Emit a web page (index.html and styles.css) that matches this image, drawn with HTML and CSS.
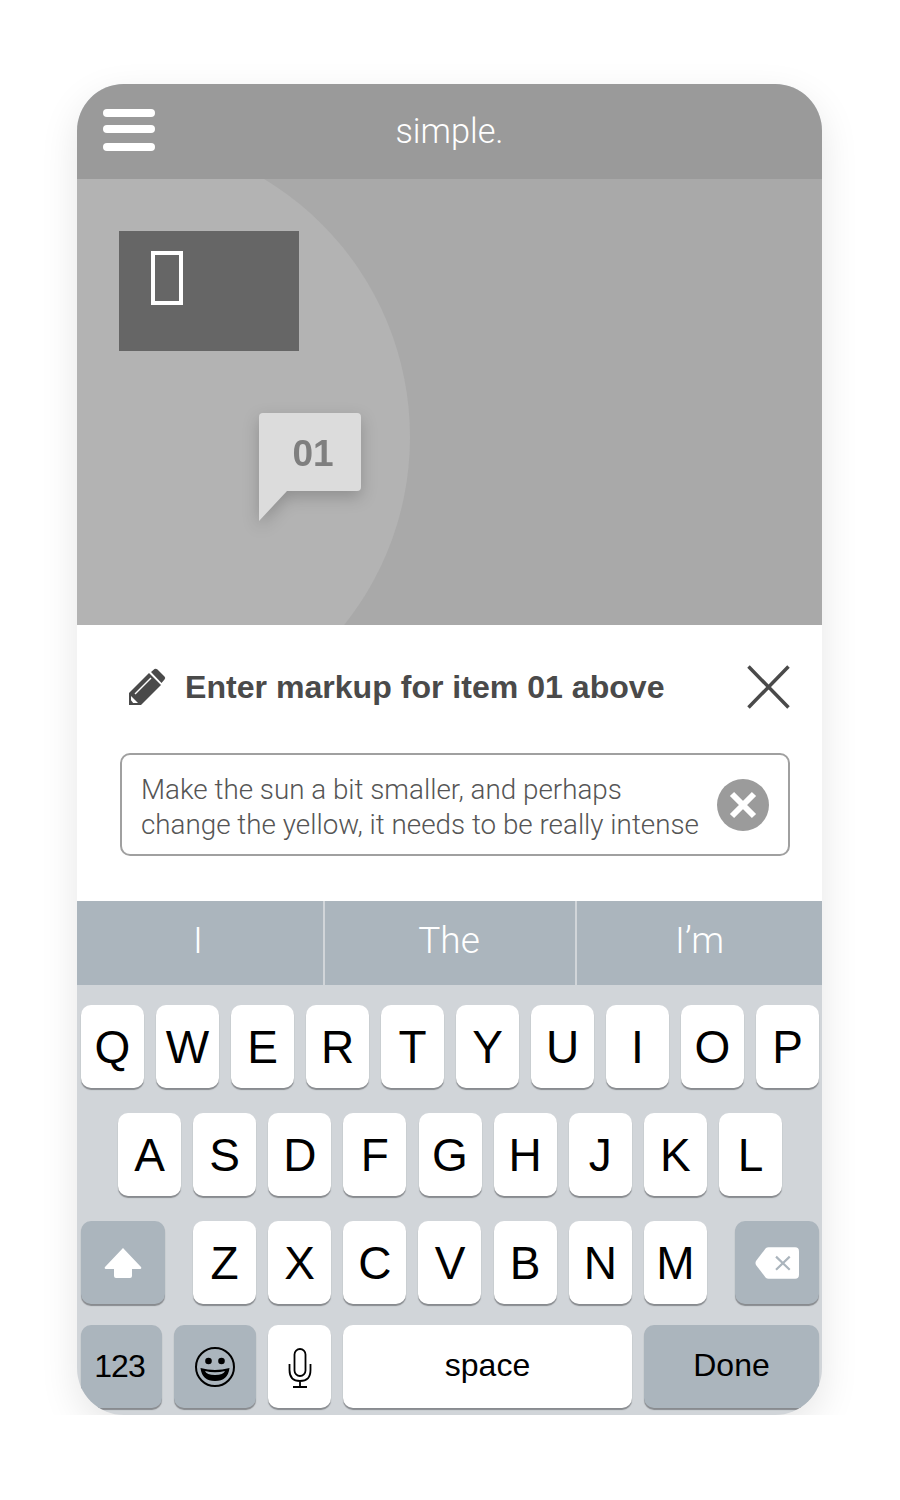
FILE: index.html
```html
<!DOCTYPE html>
<html lang="en">
<head>
  <meta charset="UTF-8">
  <meta name="viewport" content="width=device-width, initial-scale=1.0">
  <title>simple.</title>
  <link rel="stylesheet" href="styles.css">
</head>
<body>

<div class="phone">

  <!-- HEADER -->
  <div class="topbar">
    <div class="burger"><span></span><span></span><span></span></div>
    <div class="brand">simple.</div>
  </div>

  <!-- CANVAS -->
  <div class="canvas">
    <div class="sun"></div>
    <div class="photo"><span class="tofu"></span></div>
    <div class="pin">
      <svg width="102" height="108" viewBox="0 0 102 108">
        <path d="M4 0H98Q102 0 102 4V74Q102 78 98 78H28L0 108V4Q0 0 4 0Z" fill="#dcdcdc"/>
      </svg>
      <span class="pin-num">01</span>
    </div>
  </div>

  <!-- MARKUP PANEL -->
  <div class="panel">
    <div class="panel-head">
      <svg class="pencil" width="38" height="38" viewBox="0 0 38 38">
        <path d="M1 25L21 5L33 17L13 37H1Z" fill="#4a4a4a"/>
        <path d="M23 3L26.500 0Q28 -0.500 29.500 0.500L36.500 7.500Q38 9 36.500 10.500L33.500 14Z" fill="#4a4a4a" transform="translate(0 1)"/>
        <path d="M7 26L23 10" stroke="#fff" stroke-width="1.500"/>
        <path d="M3 28L10 35H3Z" fill="#fff"/>
        <path d="M2 31L6 36H2Z" fill="#4a4a4a"/>
      </svg>
      <h3>Enter markup for item 01 above</h3>
      <svg class="close-x" width="43" height="44" viewBox="0 0 43 44">
        <path d="M1.500 1.500L41.500 42.500M41.500 1.500L1.500 42.500" stroke="#4a4a4a" stroke-width="3.500" fill="none"/>
      </svg>
    </div>
    <div class="field">
      <p>Make the sun a bit smaller, and perhaps<br>change the yellow, it needs to be really intense</p>
      <svg class="clear" width="52" height="52" viewBox="0 0 52 52">
        <circle cx="26" cy="26" r="26" fill="#9b9b9b"/>
        <path d="M15 15L37 37M37 15L15 37" stroke="#fff" stroke-width="6"/>
      </svg>
    </div>
  </div>

  <!-- SUGGESTIONS -->
  <div class="suggest">
    <div class="word w1">I</div>
    <div class="word w2">The</div>
    <div class="word w3">I’m</div>
  </div>

  <!-- KEYBOARD -->
  <div class="keyboard">
    <div class="row">
      <div class="key">Q</div><div class="key">W</div><div class="key">E</div><div class="key">R</div><div class="key">T</div>
      <div class="key">Y</div><div class="key">U</div><div class="key">I</div><div class="key">O</div><div class="key">P</div>
    </div>
    <div class="row row-mid">
      <div class="key">A</div><div class="key">S</div><div class="key">D</div><div class="key">F</div><div class="key">G</div>
      <div class="key">H</div><div class="key">J</div><div class="key">K</div><div class="key">L</div>
    </div>
    <div class="row row-third">
      <div class="key dark wide">
        <svg width="40" height="32" viewBox="0 0 40 32">
          <path d="M20 1L38 20Q39 22 37 22H29V29Q29 31 27 31H13Q11 31 11 29V22H3Q1 22 2 20Z" fill="#fff"/>
        </svg>
      </div>
      <div class="letters">
        <div class="key">Z</div><div class="key">X</div><div class="key">C</div><div class="key">V</div>
        <div class="key">B</div><div class="key">N</div><div class="key">M</div>
      </div>
      <div class="key dark wide">
        <svg width="44" height="32" viewBox="0 0 45 32">
          <path d="M14 0H41Q45 0 45 4V28Q45 32 41 32H14Q12 32 11 31L1 18Q0 16 1 14L11 1Q12 0 14 0Z" fill="#fff"/>
          <path d="M21.500 9.500L35.500 23M35.500 9.500L21.500 23" stroke="#abb5bd" stroke-width="2.200"/>
        </svg>
      </div>
    </div>
    <div class="row row-bottom">
      <div class="key dark k123">123</div>
      <div class="key dark kemoji">
        <svg width="42" height="42" viewBox="0 0 42 42">
          <circle cx="21" cy="21" r="19" fill="none" stroke="#000" stroke-width="2"/>
          <circle cx="14.500" cy="15" r="3.300"/>
          <circle cx="27.500" cy="15" r="3.300"/>
          <path d="M6.500 22Q21 26 35.500 22Q34 35 21 35Q8 35 6.500 22Z"/>
          <path d="M11 25Q21 27.500 31 25Q29.500 29 21 29Q12.500 29 11 25Z" fill="#abb5bd"/>
        </svg>
      </div>
      <div class="key kmic">
        <svg width="24" height="42" viewBox="0 0 24 42">
          <rect x="6.500" y="3" width="11" height="27" rx="5.500" fill="none" stroke="#000" stroke-width="1.800"/>
          <path d="M1.500 18V24Q1.500 35 12 35Q22.500 35 22.500 24V18M12 35V41M5 41H19" fill="none" stroke="#000" stroke-width="1.800"/>
        </svg>
      </div>
      <div class="key kspace">space</div>
      <div class="key dark kdone">Done</div>
    </div>
  </div>

</div>

</body>
</html>
```

FILE: styles.css
```css
body { font-family: "Liberation Sans", Arial, sans-serif; margin: 0; background: #fff; }

.phone {
  width: 745px; height: 1331px;
  margin: 84px 0 0 77px;
  border-radius: 47px;
  overflow: hidden;
  background: #d1d5d9;
  box-shadow: 0 13px 38px rgba(0, 0, 0, 0.1);
}

/* header */
.topbar {
  height: 95px;
  background: #9a9a9a;
  display: flex; align-items: center; justify-content: center;
  position: relative;
}
.burger {
  position: absolute; top: 25px; left: 26px;
  width: 52px;
  display: flex; flex-direction: column;
}
.burger span { height: 8px; border-radius: 4px; background: #fff; margin-bottom: 8px; }
.burger span:nth-child(2) { margin-bottom: 10px; }
.brand {
  font-family: Roboto, sans-serif; font-weight: 300;
  font-size: 34.300px; color: #fff;
  margin-top: -1px;
}

/* picture area */
.canvas {
  height: 446px;
  background: #a9a9a9;
  position: relative;
  overflow: hidden;
}
.sun {
  position: absolute; left: -269px; top: -43px;
  width: 602px; height: 602px;
  border-radius: 50%;
  background: #b3b3b3;
}
.photo {
  position: absolute; left: 42px; top: 52px;
  width: 180px; height: 120px;
  background: #666;
}
.tofu {
  position: absolute; left: 32px; top: 20px;
  width: 32px; height: 54px;
  box-sizing: border-box;
  border: 4px solid #fff;
}
.pin {
  position: absolute; left: 182px; top: 234px;
  width: 102px; height: 108px;
  filter: drop-shadow(0 6px 8px rgba(0, 0, 0, 0.2));
}
.pin svg { display: block; }
.pin-num {
  position: absolute; top: 20px; left: 0; width: 108px;
  text-align: center;
  font-size: 37px; font-weight: bold; line-height: 42px;
  color: #7f7f7f;
}

/* markup panel */
.panel {
  height: 276px;
  background: #fff;
  box-sizing: border-box;
  padding: 40px 32px 0 43px;
}
.panel-head { display: flex; align-items: center; height: 44px; }
.pencil { margin: 0 19px 0 8px; flex: none; }
.panel-head h3 {
  margin: 0; flex: 1;
  font-size: 32.100px; font-weight: bold;
  color: #4a4a4a;
}
.close-x { flex: none; }
.field {
  margin-top: 44px;
  width: 670px; height: 103px;
  box-sizing: border-box;
  border: 2px solid #a0a0a0;
  border-radius: 10px;
  display: flex; align-items: center; justify-content: space-between;
  padding: 0 19px;
}
.field p {
  margin: 4px 0 0;
  font-family: Roboto, sans-serif; font-weight: 300;
  font-size: 27.800px; line-height: 35px;
  color: #555;
  white-space: nowrap;
}
.clear { flex: none; }

/* suggestion bar */
.suggest { height: 84px; display: flex; background: #d1d5d9; }
.word {
  background: #abb5bd;
  display: flex; align-items: center; justify-content: center;
  font-family: Roboto, sans-serif; font-weight: 300;
  font-size: 37px; color: #fff;
  padding-bottom: 6px;
  box-sizing: border-box;
}
.w1 { width: 246px; padding-right: 4px; }
.w2 { width: 250px; margin: 0 2px; padding-right: 2px; }
.w3 { width: 245px; }

/* keyboard */
.keyboard { height: 430px; box-sizing: border-box; padding: 20px 3px 0 4px; }
.row { display: flex; justify-content: space-between; margin-bottom: 25px; }
.row-mid { margin-left: 37px; margin-right: 37px; }
.row-third { margin-bottom: 21px; }
.letters { width: 514px; display: flex; justify-content: space-between; }
.key {
  width: 63px; height: 83px;
  flex: none;
  background: #fff;
  border-radius: 10px;
  box-shadow: 0 2px 1px #888b8f;
  display: flex; align-items: center; justify-content: center;
  font-size: 46px; color: #000;
}
.key.dark { background: #abb5bd; }
.key.wide { width: 84px; }
.k123 { width: 81px; font-size: 32px; letter-spacing: -1px; padding-right: 4px; box-sizing: border-box; }
.kemoji { width: 82px; }
.kspace { width: 289px; font-size: 32px; padding-bottom: 2px; box-sizing: border-box; }
.kdone { width: 175px; font-size: 32px; padding-bottom: 2px; box-sizing: border-box; }
```
